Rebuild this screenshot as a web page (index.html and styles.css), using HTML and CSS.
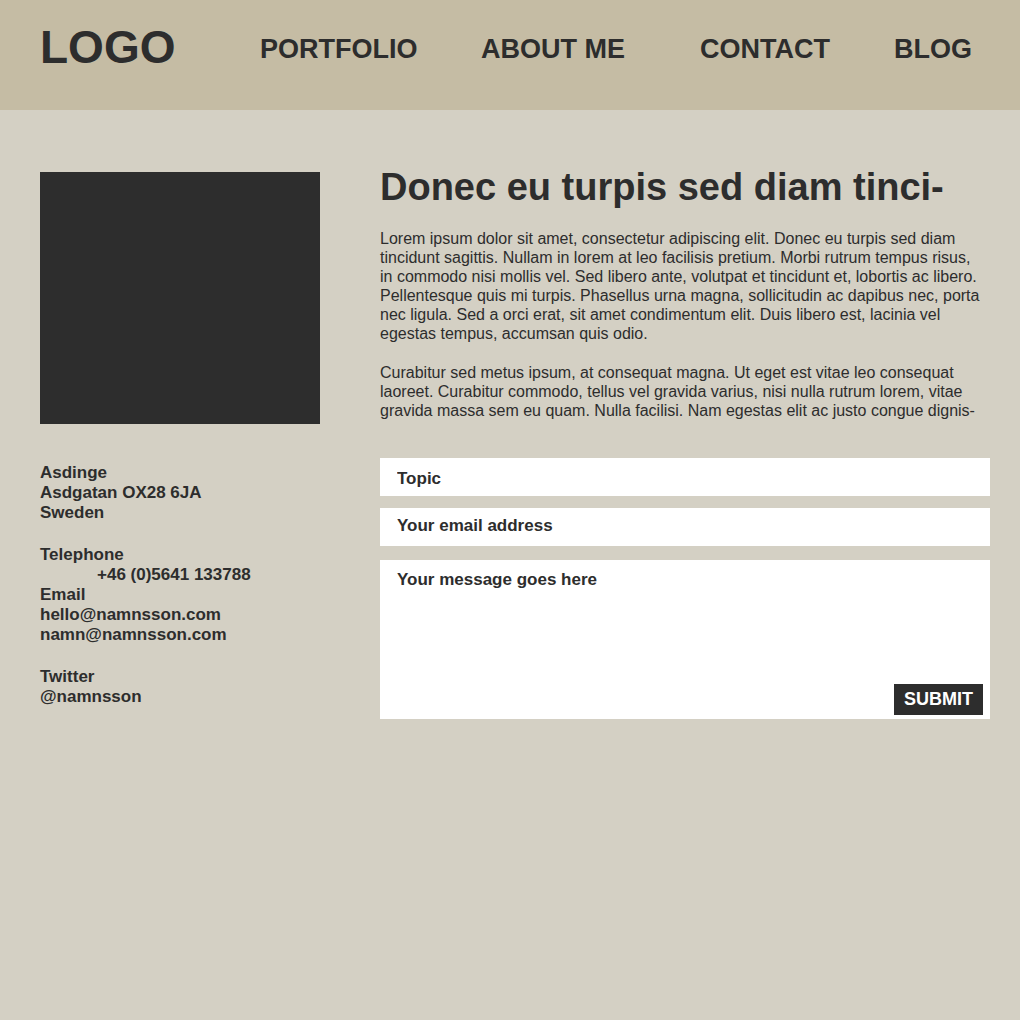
FILE: index.html
```html
<!DOCTYPE html>
<html lang="en">
<head>
  <meta charset="utf-8">
  <meta name="viewport" content="width=device-width, initial-scale=1">
  <title>Contact</title>
  <link rel="stylesheet" href="styles.css">
</head>
<body>
  <header class="site-header">
    <a class="logo" href="#">LOGO</a>
    <nav class="site-nav">
      <a href="#">PORTFOLIO</a>
      <a href="#">ABOUT ME</a>
      <a href="#">CONTACT</a>
      <a href="#">BLOG</a>
    </nav>
  </header>

  <main class="page">
    <aside class="sidebar">
      <div class="portrait"></div>
      <address class="details">
        <p>Asdinge<br>Asdgatan OX28 6JA<br>Sweden</p>
        <dl>
          <dt>Telephone</dt>
          <dd class="phone">+46 (0)5641 133788</dd>
          <dt>Email</dt>
          <dd><a href="mailto:hello@namnsson.com">hello@namnsson.com</a></dd>
          <dd><a href="mailto:namn@namnsson.com">namn@namnsson.com</a></dd>
        </dl>
        <dl>
          <dt>Twitter</dt>
          <dd><a href="#">@namnsson</a></dd>
        </dl>
      </address>
    </aside>

    <section class="content">
      <h1 class="title">Donec eu turpis sed diam tinci-</h1>
      <div class="copy">
        <p>Lorem ipsum dolor sit amet, consectetur adipiscing elit. Donec eu turpis sed diam tincidunt sagittis. Nullam in lorem at leo facilisis pretium. Morbi rutrum tempus risus, in commodo nisi mollis vel. Sed libero ante, volutpat et tincidunt et, lobortis ac libero. Pellentesque quis mi turpis. Phasellus urna magna, sollicitudin ac dapibus nec, porta nec ligula. Sed a orci erat, sit amet condimentum elit. Duis libero est, lacinia vel egestas tempus, accumsan quis odio.</p>
        <p>Curabitur sed metus ipsum, at consequat magna. Ut eget est vitae leo consequat laoreet. Curabitur commodo, tellus vel gravida varius, nisi nulla rutrum lorem, vitae gravida massa sem eu quam. Nulla facilisi. Nam egestas elit ac justo congue dignis-</p>
      </div>
      <form class="contact-form">
        <input class="field field-topic" type="text" placeholder="Topic" aria-label="Topic">
        <input class="field field-email" type="email" placeholder="Your email address" aria-label="Your email address">
        <div class="message">
          <textarea class="field field-message" placeholder="Your message goes here" aria-label="Your message goes here"></textarea>
          <button class="submit" type="submit">SUBMIT</button>
        </div>
      </form>
    </section>
  </main>
</body>
</html>
```

FILE: styles.css
```css
* {
  box-sizing: border-box;
}

body {
  margin: 0;
  background: #d4d0c4;
  color: #2d2d2d;
  font-family: "Liberation Sans", Arial, Helvetica, sans-serif;
}

a {
  color: inherit;
  text-decoration: none;
}

p,
dl,
dd {
  margin: 0;
}

/* Header */
.site-header {
  display: grid;
  grid-template-columns: 160px 1fr;
  column-gap: 60px;
  align-items: center;
  padding: 20px 48px 36px 40px;
  background: #c5bca4;
  font-weight: bold;
}

.logo {
  font-size: 46px;
  line-height: 54px;
}

.site-nav {
  display: grid;
  grid-template-columns: 221fr 219fr 194fr 78fr;
  padding-top: 4px;
  font-size: 27px;
  line-height: 30px;
  white-space: nowrap;
}

/* Page body */
.page {
  display: grid;
  grid-template-columns: 280px 1fr;
  column-gap: 60px;
  padding: 62px 30px 40px 40px;
}

.portrait {
  height: 252px;
  background: #2d2d2d;
}

.details {
  display: flex;
  flex-direction: column;
  gap: 22px;
  margin-top: 39px;
  font-size: 17px;
  font-style: normal;
  font-weight: bold;
  line-height: 20px;
}

.phone {
  padding-left: 57px;
}

.title {
  margin: -6px 0 21px;
  font-size: 38px;
  line-height: 42px;
}

.copy {
  display: flex;
  flex-direction: column;
  gap: 20px;
  padding-right: 8px;
  font-size: 16px;
  line-height: 19px;
}

/* Contact form */
.contact-form {
  display: flex;
  flex-direction: column;
  margin-top: 38px;
}

.field {
  display: block;
  width: 100%;
  border: 0;
  border-radius: 0;
  background: #fff;
  color: inherit;
  font: bold 17px/20px "Liberation Sans", Arial, Helvetica, sans-serif;
}

.field::placeholder {
  color: #2d2d2d;
  opacity: 1;
}

.field-topic {
  padding: 11px 17px 7px;
}

.field-email {
  margin-top: 12px;
  padding: 8px 17px 10px;
}

.message {
  position: relative;
  margin-top: 14px;
}

.field-message {
  height: 159px;
  padding: 10px 17px;
  resize: none;
}

.submit {
  position: absolute;
  right: 7px;
  bottom: 4px;
  padding: 5px 10px 6px;
  border: 0;
  background: #2d2d2d;
  color: #fff;
  font: bold 18px/20px "Liberation Sans", Arial, Helvetica, sans-serif;
}
```
